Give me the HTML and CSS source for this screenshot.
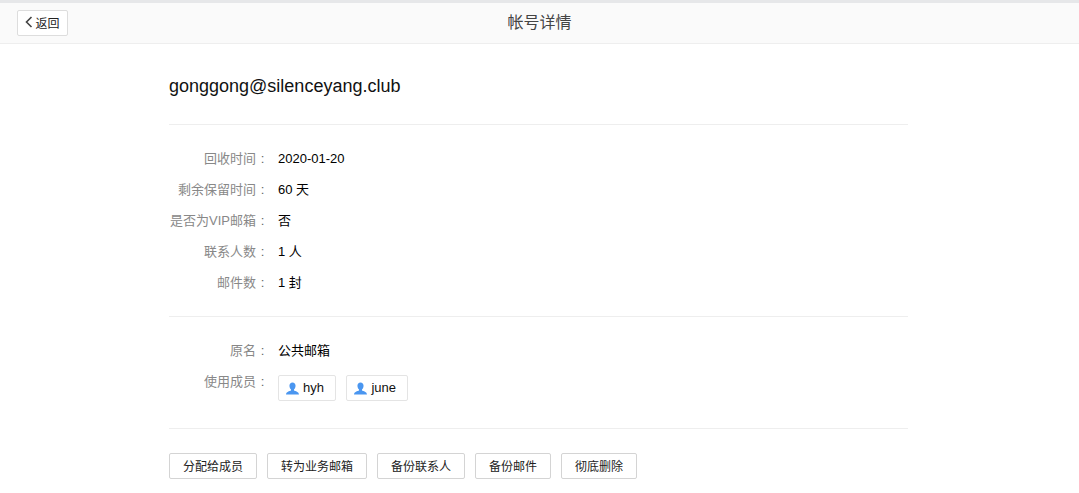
FILE: index.html
```html
<!doctype html>
<html lang="zh-CN">
  <head>
    <meta charset="utf-8">
    <title>帐号详情</title>
    <link rel="stylesheet" href="styles.css">
  </head>
  <body>
    <div class="header">
      <a class="back-btn">
        <svg class="back-icon" width="8" height="12" viewBox="0 0 8 12"><path d="M6.500 1 1.500 6l5 5" fill="none" stroke="#444" stroke-width="1.6"/></svg>返回
      </a>
      <div class="header-title">帐号详情</div>
    </div>
    <div class="content">
      <h1 class="account">gonggong@silenceyang.club</h1>
      <div class="section stats">
        <div class="row"><span class="label">回收时间<span class="colon">:</span></span><span class="value">2020-01-20</span></div>
        <div class="row"><span class="label">剩余保留时间<span class="colon">:</span></span><span class="value">60 天</span></div>
        <div class="row"><span class="label">是否为VIP邮箱<span class="colon">:</span></span><span class="value">否</span></div>
        <div class="row"><span class="label">联系人数<span class="colon">:</span></span><span class="value">1 人</span></div>
        <div class="row"><span class="label">邮件数<span class="colon">:</span></span><span class="value">1 封</span></div>
      </div>
      <div class="section owners">
        <div class="row"><span class="label">原名<span class="colon">:</span></span><span class="value">公共邮箱</span></div>
        <div class="row members-row">
          <span class="label">使用成员<span class="colon">:</span></span>
          <div class="members">
            <span class="member">
              <svg width="13" height="13" viewBox="0 0 14 13"><path d="M7 0c2 0 3.300 1.500 3.300 3.500S9.200 7 8.600 7.600v1C10 9.300 14 10 14 13H0c0-3 4-3.700 5.400-4.400v-1C4.800 7 3.700 5.500 3.700 3.500S5 0 7 0z" fill="#4a96f0"/></svg>hyh
            </span>
            <span class="member">
              <svg width="13" height="13" viewBox="0 0 14 13"><path d="M7 0c2 0 3.300 1.500 3.300 3.500S9.200 7 8.600 7.600v1C10 9.300 14 10 14 13H0c0-3 4-3.700 5.400-4.400v-1C4.800 7 3.700 5.500 3.700 3.500S5 0 7 0z" fill="#4a96f0"/></svg>june
            </span>
          </div>
        </div>
      </div>
      <div class="actions">
        <button class="btn">分配给成员</button>
        <button class="btn">转为业务邮箱</button>
        <button class="btn">备份联系人</button>
        <button class="btn">备份邮件</button>
        <button class="btn">彻底删除</button>
      </div>
    </div>
  </body>
</html>
```

FILE: styles.css
```css
html,
body {
  margin: 0;
  height: 100%;
  background-color: #fff;
  color: #000;
  font-family: "Liberation Sans", Arial, "Noto Sans CJK SC", sans-serif;
  font-size: 12px;
  overflow: hidden;
}

.header {
  height: 40px;
  border-top: 3px solid #e6e7e9;
  border-bottom: 1px solid #eee;
  background-color: #fafafa;
  padding-left: 17px;
  display: flex;
  align-items: center;
  position: relative;
}

.back-btn {
  box-sizing: border-box;
  width: 51px;
  height: 26px;
  padding-bottom: 2px;
  border: 1px solid #ddd;
  border-radius: 2px;
  background-color: #fff;
  display: flex;
  align-items: center;
  justify-content: center;
  gap: 2px;
  color: #222;
}

.header-title {
  position: absolute;
  left: 0;
  right: 0;
  top: 9px;
  line-height: 22px;
  text-align: center;
  font-size: 16px;
  color: #444;
}

.content {
  width: 739px;
  margin-left: 169px;
}

.account {
  margin: 0;
  padding: 32px 0 27px;
  font-size: 18px;
  font-weight: normal;
  line-height: 21px;
  color: #111;
}

.section {
  border-top: 1px solid #eee;
}

.stats {
  padding: 18px 0 18px;
}

.owners {
  padding: 18px 0 27px;
}

.row {
  display: flex;
  height: 31px;
  line-height: 31px;
  font-size: 13px;
}

.label {
  width: 100px;
  text-align: right;
  color: #888;
  white-space: nowrap;
}

.colon {
  display: inline-block;
  width: 13px;
  text-align: center;
  color: #666;
}

.value {
  margin-left: 9px;
}

.members-row {
  height: auto;
}

.members {
  display: flex;
  gap: 10.5px;
  margin-left: 9px;
  padding-top: 9px;
}

.member {
  box-sizing: border-box;
  height: 26px;
  padding: 0 11px 0 7px;
  border: 1px solid #e4e4e4;
  border-radius: 2px;
  display: flex;
  align-items: center;
  gap: 4px;
  line-height: 24px;
  color: #111;
}

.actions {
  border-top: 1px solid #eee;
  padding-top: 24px;
  display: flex;
  gap: 10px;
}

.btn {
  box-sizing: border-box;
  height: 26px;
  padding: 0 13px 2px;
  border: 1px solid #d4d4d4;
  border-radius: 2px;
  background-color: #fff;
  color: #222;
  font-family: inherit;
  font-size: 12px;
}
```
